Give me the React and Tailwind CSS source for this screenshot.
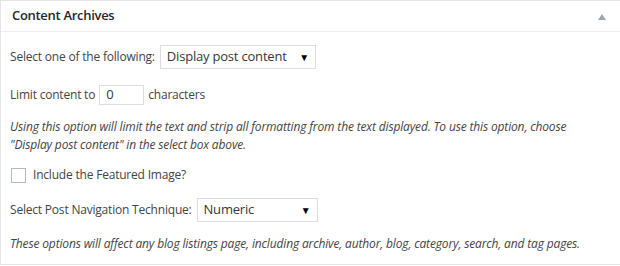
import React from "react";

const SelectBox = ({ value, width }) => (
  <div
    className={`flex items-center justify-between h-6 border border-[#dddddd] bg-white pl-[6px] pr-[6px] text-[13px] tracking-[-0.2px] text-[#32373c] ${width}`}
  >
    <span>{value}</span>
    <span className="text-[10px] text-black">▼</span>
  </div>
);

const App = () => {
  return (
    <div className="w-[622px] h-[266px] overflow-hidden bg-white font-['Open_Sans',sans-serif] text-[12px] tracking-[-0.2px] text-[#444444]">
      <div className="border border-[#e5e5e5] bg-white h-[265px]">
        <div className="flex items-center justify-between h-[31px] border-b border-[#eeeeee] pl-[11px] pr-[11px]">
          <h2 className="text-[13px] font-semibold tracking-[-0.3px] text-[#23282d]">Content Archives</h2>
          <svg width="10" height="8" viewBox="0 0 10 8" className="mr-[3px] mt-[2px]">
            <polygon points="5,1 9,7 1,7" fill="#a0a5aa" />
          </svg>
        </div>
        <div className="pl-[9px] pt-[13px]">
          <div className="flex items-center gap-[5px] h-6">
            <span>Select one of the following:</span>
            <SelectBox value="Display post content" width="w-[156px]" />
          </div>
          <div className="flex items-center gap-[4px] mt-[16px] h-5">
            <span>Limit content to</span>
            <div className="w-[45px] h-[20px] border border-[#dddddd] pl-[6px] flex items-center text-[13px] text-[#32373c]">0</div>
            <span>characters</span>
          </div>
          <p className="italic leading-[18px] mt-[13px] pr-[10px] tracking-[-0.15px]">
            Using this option will limit the text and strip all formatting from the text displayed. To use this option, choose
            <br />
            "Display post content" in the select box above.
          </p>
          <div className="flex items-center gap-[7px] mt-[13px] h-4">
            <div className="w-[15px] h-[15px] border border-[#b4b9be] bg-white ml-[1px]" />
            <span>Include the Featured Image?</span>
          </div>
          <div className="flex items-center gap-[5px] mt-[15px] h-6">
            <span>Select Post Navigation Technique:</span>
            <SelectBox value="Numeric" width="w-[121px]" />
          </div>
          <p className="italic leading-[18px] mt-[13px] tracking-[-0.15px] whitespace-nowrap">
            These options will affect any blog listings page, including archive, author, blog, category, search, and tag pages.
          </p>
        </div>
      </div>
    </div>
  );
};

export default App;
